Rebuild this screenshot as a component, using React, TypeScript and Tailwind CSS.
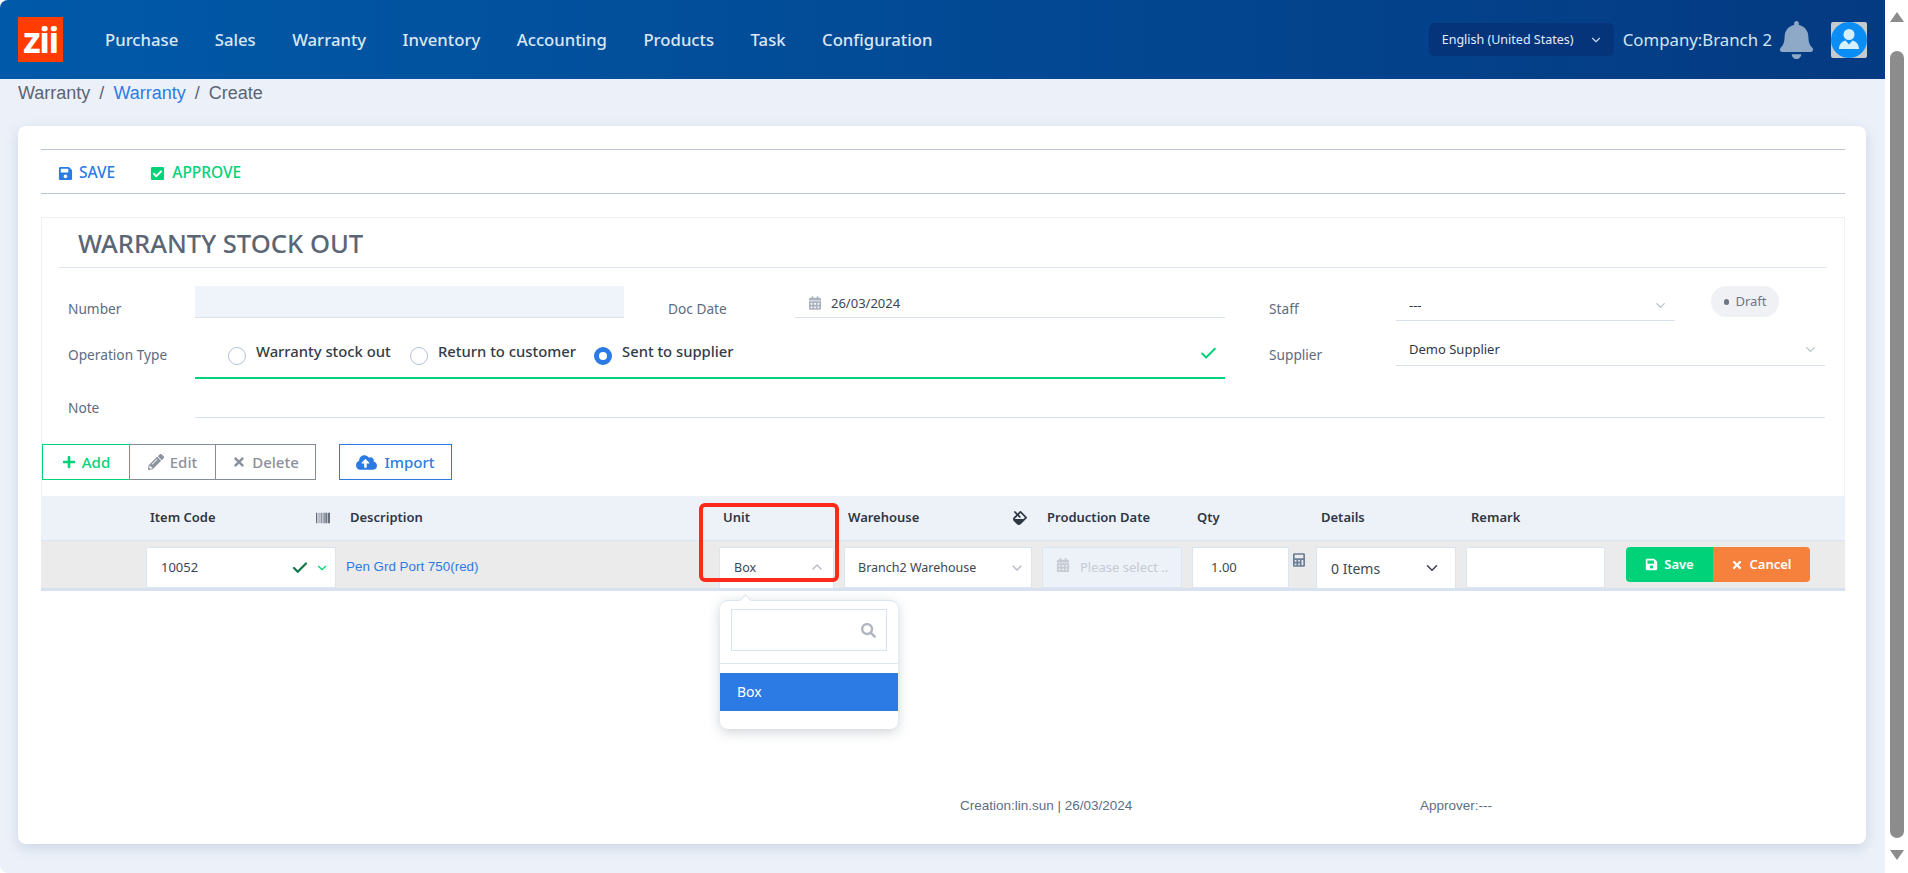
import { Check, ChevronDown, ChevronUp } from 'lucide-react'
import {
  FaBarcode,
  FaBell,
  FaCalculator,
  FaCalendarAlt,
  FaCheckSquare,
  FaCloudUploadAlt,
  FaFill,
  FaPencilAlt,
  FaPlus,
  FaSave,
  FaSearch,
  FaTimes,
} from 'react-icons/fa'

const NAV = ['Purchase', 'Sales', 'Warranty', 'Inventory', 'Accounting', 'Products', 'Task', 'Configuration']

const COLS = 'grid grid-cols-[105px_200px_373px_125px_198px_150px_124px_150px_160px_218px]'

function Radio({ label, checked, className }: { label: string; checked?: boolean; className: string }) {
  return (
    <div className={`flex items-start ${className}`}>
      {checked ? (
        <span className="mt-[13px] w-[18px] h-[18px] rounded-full border-[5px] border-[#2c7be5] bg-white" />
      ) : (
        <span className="mt-[13px] w-[18px] h-[18px] rounded-full border border-[#b6c1d2] bg-white" />
      )}
      <span className="ml-[10px] mt-[7px] text-[14.8px] leading-[20px] font-medium text-[#333b49] whitespace-nowrap">{label}</span>
    </div>
  )
}

function Header() {
  return (
    <header className="h-[79px] shrink-0 flex items-center rounded-tl-lg bg-linear-to-r from-[#005aa9] to-[#043a81] pl-[18px]">
      <div className="w-[45px] h-[45px] bg-[#ff3d00] flex items-center justify-center">
        <span className="text-[36px] leading-[40px] font-bold tracking-[-1.5px] text-white">zii</span>
      </div>
      <nav className="ml-[42px] flex gap-[36.5px]">
        {NAV.map((n) => (
          <a key={n} className="text-[16.7px] font-medium text-[#d9e7f5] whitespace-nowrap">
            {n}
          </a>
        ))}
      </nav>
      <div className="ml-auto flex items-center pr-[18px]">
        <div className="w-[185px] h-[33px] rounded-md bg-[#06347a] flex items-center justify-between pl-[13px] pr-[11px] text-[12.5px] text-[#e2ecf7]">
          <span className="pt-[2px]">English (United States)</span>
          <ChevronDown size={14} className="text-[#c6d4e6]" />
        </div>
        <span className="ml-[9px] text-[16.8px] text-[#d4e4f4] whitespace-nowrap">Company:Branch 2</span>
        <FaBell className="ml-[7px] w-[35px] h-[38px] text-[#8ea8c8]" />
        <svg viewBox="0 0 36 36" className="ml-[17px] w-[36px] h-[36px]">
          <rect width="36" height="36" rx="2" fill="#c6c9cd" />
          <circle cx="18" cy="18" r="18" fill="#0b8df6" />
          <circle cx="18" cy="12.5" r="5.5" fill="#d6f0ff" />
          <path d="M8 27c0-5 3-7.5 6.5-8.5l3.5 4 3.5-4C25 19.500 28 22 28 27z" fill="#d6f0ff" />
        </svg>
      </div>
    </header>
  )
}

function Form() {
  return (
    <>
      <div className="flex h-[34px] mt-[18px]">
        <label className="w-[153px] pl-[26px] pt-[13px] text-[13.7px] leading-[20px] text-[#5e6b7e]">Number</label>
        <div className="w-[429px] h-[32px] bg-[#eff3fa] border-b border-[#d9e0ec]" />
        <label className="ml-[44px] w-[127px] pt-[13px] text-[13.7px] leading-[20px] text-[#5e6b7e]">Doc Date</label>
        <div className="w-[430px] h-[32px] border-b border-[#d9e0ec] flex items-start pl-[14px] pt-[7px]">
          <FaCalendarAlt className="mt-[3px] w-[12px] h-[14px] text-[#aab2be]" />
          <span className="ml-[10px] text-[13px] leading-[20px] text-[#3d4654]">26/03/2024</span>
        </div>
        <label className="ml-[44px] w-[127px] pt-[13px] text-[13.7px] leading-[20px] text-[#5e6b7e]">Staff</label>
        <div className="w-[279px] h-[35px] border-b border-[#d9e0ec] flex items-start justify-between pl-[13px] pr-[7px] pt-[9px]">
          <span className="text-[13px] leading-[20px] text-[#2f3743]">---</span>
          <ChevronDown size={15} className="mt-[3px] text-[#b9c0cb]" />
        </div>
        <div className="ml-[36px] pl-px w-[68px] h-[31px] rounded-full bg-[#f0f1f4] flex items-center justify-center gap-[6px] text-[13px] text-[#6d7685]">
          <span className="w-[5px] h-[6px] rounded-full bg-[#6d7685]" />
          Draft
        </div>
      </div>

      <div className="flex h-[45px] mt-[14px]">
        <label className="w-[153px] pl-[26px] pt-[11px] text-[13.7px] leading-[20px] text-[#5e6b7e]">Operation Type</label>
        <div className="relative w-[1030px] border-b-2 border-[#00d27a] flex pl-[33px]">
          <Radio label="Warranty stock out" className="w-[182px]" />
          <Radio label="Return to customer" className="w-[184px]" />
          <Radio label="Sent to supplier" checked className="" />
          <Check size={19} strokeWidth={2.5} className="absolute right-[7px] top-[10px] text-[#00d27a]" />
        </div>
        <label className="ml-[44px] w-[127px] pt-[11px] text-[13.7px] leading-[20px] text-[#5e6b7e]">Supplier</label>
        <div className="w-[429px] h-[32px] border-b border-[#d9e0ec] flex items-start justify-between pl-[13px] pr-[7px] pt-[5px]">
          <span className="text-[13px] leading-[20px] text-[#2f3743]">Demo Supplier</span>
          <ChevronDown size={15} className="mt-[3px] text-[#b9c0cb]" />
        </div>
      </div>

      <div className="flex h-[24px] mt-[15px]">
        <label className="w-[153px] pl-[26px] pt-[4px] text-[13.7px] leading-[20px] text-[#5e6b7e]">Note</label>
        <div className="w-[1630px] border-b border-[#d9e0ec]" />
      </div>
    </>
  )
}

function Actions() {
  return (
    <div className="flex h-[36px] mt-[26px] text-[15px] font-medium">
      <button className="w-[88px] border border-[#00d27a] text-[#00d27a] flex items-center justify-center gap-[6px]">
        <FaPlus size={14} />
        Add
      </button>
      <button className="w-[86px] border-y border-r border-[#848c97] text-[#8a929d] flex items-center justify-center gap-[6px]">
        <FaPencilAlt size={16} />
        Edit
      </button>
      <button className="w-[100px] border-y border-r border-[#848c97] text-[#8a929d] flex items-center justify-center gap-[6px]">
        <FaTimes size={14} />
        Delete
      </button>
      <button className="ml-[23px] w-[113px] border border-[#2c7be5] text-[#2c7be5] flex items-center justify-center gap-[7px]">
        <FaCloudUploadAlt size={21} />
        Import
      </button>
    </div>
  )
}

function Table() {
  const head = 'pl-[4px] text-[13px] font-semibold text-[#2f3744] flex items-center'
  const input = 'h-[41px] bg-white border border-[#dbe5f1] text-[12.5px] text-[#3d4654] flex items-center'
  return (
    <div className="relative mt-[16px] -mx-px">
      <div className={`${COLS} h-[45px] bg-[#edf2f9] border-b border-[#d9e5f5]`}>
        <div />
        <div className={`${head} justify-between pr-[16px]`}>
          Item Code
          <FaBarcode size={14} className="text-[#39414f]" />
        </div>
        <div className={head}>Description</div>
        <div className={head}>Unit</div>
        <div className={`${head} justify-between pr-[15px]`}>
          Warehouse
          <FaFill size={14} />
        </div>
        <div className={`${head} pl-[5px]`}>Production Date</div>
        <div className={`${head} pl-[5px]`}>Qty</div>
        <div className={`${head} pl-[5px]`}>Details</div>
        <div className={`${head} pl-[5px]`}>Remark</div>
        <div />
      </div>

      <div className={`${COLS} h-[50px] pt-[6px] bg-[#ebebeb] border-b-[3px] border-[#d8e2ef]`}>
        <div />
        <div className="pr-[10px]">
          <div className={`${input} pl-[14px] pr-[6px] text-[13px]`}>
            10052
            <Check size={18} strokeWidth={3} className="ml-auto text-[#107a4d]" />
            <ChevronDown size={14} className="ml-[6px] text-[#00d27a]" />
          </div>
        </div>
        <div className="font-['Liberation_Sans',sans-serif] text-[13.4px] leading-[41px] text-[#2c7be5] -mt-[1px]">Pen Grd Port 750(red)</div>
        <div className="pr-[10px]">
          <div className={`${input} h-[42px] pl-[14px] pr-[8px] justify-between`}>
            <span className="pt-px">Box</span>
            <ChevronUp size={16} className="-mt-[2px] text-[#b4bac3]" />
          </div>
        </div>
        <div className="pr-[10px]">
          <div className={`${input} pl-[13px] pr-[6px] justify-between`}>
            <span className="pt-px">Branch2 Warehouse</span>
            <ChevronDown size={16} className="text-[#b4bac3]" />
          </div>
        </div>
        <div className="pr-[10px]">
          <div className="h-[41px] bg-[#edf1f8] border border-[#dbe5f1] flex items-center pl-[13px] text-[13px] text-[#c5cad3]">
            <FaCalendarAlt size={14} className="-mt-[6px] text-[#c5cad3]" />
            <span className="ml-[10px] pt-px">Please select ..</span>
          </div>
        </div>
        <div className="flex items-start">
          <div className={`${input} w-[97px] pl-[18px] text-[13px]`}>1.00</div>
          <FaCalculator className="ml-[4px] mt-[6px] w-[12px] h-[14px] text-[#6b7f96]" />
        </div>
        <div className="pr-[10px]">
          <div className={`${input} h-[42px] pl-[14px] pr-[14px] justify-between text-[14px]`}>
            0 Items
            <ChevronDown size={18} className="text-[#39414f]" />
          </div>
        </div>
        <div className="pr-[21px]">
          <div className={input} />
        </div>
        <div className="flex items-start text-[13px] font-semibold text-white">
          <button className="w-[87px] h-[35px] rounded-l bg-[#00d27a] flex items-center justify-center gap-[6px]">
            <FaSave size={13} />
            Save
          </button>
          <button className="w-[97px] h-[35px] rounded-r bg-[#f6813d] flex items-center justify-center gap-[6px]">
            <FaTimes size={12} />
            Cancel
          </button>
        </div>
      </div>

      {/* annotation around the unit column */}
      <div className="absolute left-[658px] top-[7px] w-[140px] h-[79px] rounded-md border-[4px] border-[#fb2a1a]" />

      {/* open unit dropdown */}
      <div className="absolute left-[679px] top-[104px] w-[178px] h-[129px] rounded-lg bg-white border-t border-[#dbe4ef] shadow-[0_3px_12px_rgba(60,75,100,0.25)] z-10">
        <span className="absolute left-[21px] -top-[5px] w-[9px] h-[9px] rotate-45 bg-white border-l border-t border-[#dbe4ef]" />
        <div className="relative mt-[8px] mx-[11px] h-[42px] border border-[#d9e3ef] flex items-center justify-end pr-[10px]">
          <FaSearch size={15} className="text-[#b0b6bf]" />
        </div>
        <div className="mt-[12px] border-t border-[#dbe4ef]" />
        <div className="mt-[9px] h-[38px] bg-[#2c7be5] flex items-center pl-[17px] pb-px text-[14px] text-white">Box</div>
      </div>
    </div>
  )
}

export default function App() {
  return (
    <div className="flex h-screen w-full overflow-hidden bg-white font-['Noto_Sans',sans-serif]">
      <main className="w-[1885px] h-[873px] shrink-0 bg-[#ecf1f9] rounded-l-lg">
        <Header />
        <div className="h-[47px] pl-[18px] pt-[3px] font-['Liberation_Sans',sans-serif] text-[18px] leading-[22px] text-[#5b6472]">
          Warranty <span className="mx-[4px]">/</span> <span className="text-[#2c7be5]">Warranty</span> <span className="mx-[4px]">/</span> Create
        </div>
        <section className="ml-[18px] w-[1848px] h-[718px] rounded-lg bg-white shadow-[0_4px_14px_rgba(80,100,140,0.2)] pl-[23px] pr-[21px] pt-[23px]">
          <div className="h-[45px] border-y border-[#bcc4d4] flex items-center pl-[17px] pt-[3px] text-[15.5px] font-medium">
            <span className="flex items-center gap-[6px] text-[#2c7be5]">
              <FaSave size={15} />
              SAVE
            </span>
            <span className="ml-[35px] flex items-center gap-[7px] text-[#00d27a]">
              <FaCheckSquare size={15} />
              APPROVE
            </span>
          </div>

          <div className="mt-[23px] border-x border-t border-[#eef0f4]">
            <div className="ml-[17px] mr-[18px] h-[50px] border-b border-[#dfe5ee] pl-[19px] pt-[3px] flex items-center">
              <h1 className="text-[25.6px] font-medium text-[#5b6675] whitespace-nowrap">WARRANTY STOCK OUT</h1>
            </div>
            <Form />
            <Actions />
            <Table />
          </div>

          <div className="flex mt-[206px] pl-[919px] font-['Liberation_Sans',sans-serif] text-[13.5px] leading-[18px] text-[#5e6e82]">
            <span className="w-[460px]">Creation:lin.sun | 26/03/2024</span>
            <span>Approver:---</span>
          </div>
        </section>
      </main>

      {/* browser scrollbar */}
      <aside className="flex-1 flex flex-col items-center bg-white">
        <svg viewBox="0 0 14 10" className="mt-[12px] w-[14px] h-[10px] fill-[#8c8c8c]">
          <polygon points="7,0 14,10 0,10" />
        </svg>
        <div className="mt-[29px] w-[14px] h-[787px] rounded-full bg-[#8c8c8c]" />
        <svg viewBox="0 0 14 10" className="mt-[12px] w-[14px] h-[10px] fill-[#8c8c8c]">
          <polygon points="0,0 14,0 7,10" />
        </svg>
      </aside>
    </div>
  )
}
